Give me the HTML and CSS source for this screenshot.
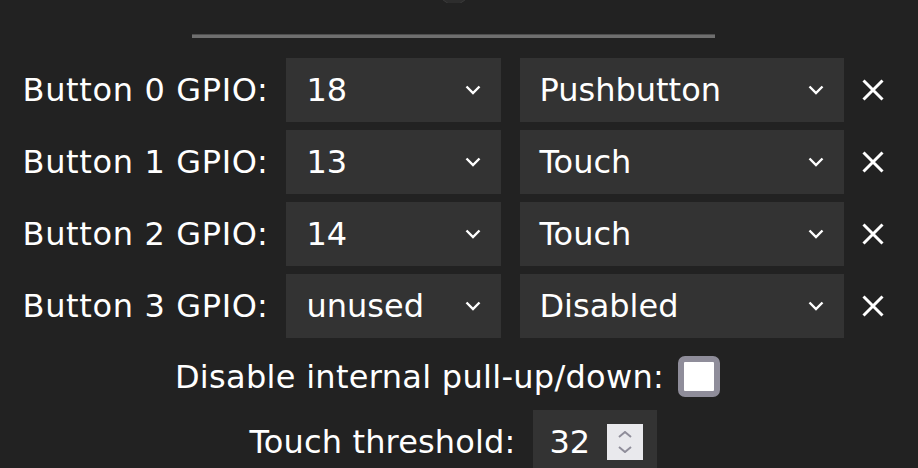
FILE: index.html
```html
<!DOCTYPE html>
<html>
<head>
<meta charset="utf-8">
<link rel="stylesheet" href="styles.css">
</head>
<body>
<div class="page">
  <div class="orb-clip"><div class="orb"></div></div>
  <div class="divider"></div>
  <div class="rows">
    <div class="label">Button 0 GPIO:</div>
    <div class="select pin"><span>18</span><svg class="chev" viewBox="0 0 16 10"><path d="M1.5 1.5 L8 8 L14.5 1.5"/></svg></div>
    <div class="select mode"><span>Pushbutton</span><svg class="chev" viewBox="0 0 16 10"><path d="M1.5 1.5 L8 8 L14.5 1.5"/></svg></div>
    <svg class="remove" viewBox="0 0 22 22"><path d="M1.5 1.5 L20.5 20.5 M20.5 1.5 L1.5 20.5"/></svg>

    <div class="label">Button 1 GPIO:</div>
    <div class="select pin"><span>13</span><svg class="chev" viewBox="0 0 16 10"><path d="M1.5 1.5 L8 8 L14.5 1.5"/></svg></div>
    <div class="select mode"><span>Touch</span><svg class="chev" viewBox="0 0 16 10"><path d="M1.5 1.5 L8 8 L14.5 1.5"/></svg></div>
    <svg class="remove" viewBox="0 0 22 22"><path d="M1.5 1.5 L20.5 20.5 M20.5 1.5 L1.5 20.5"/></svg>

    <div class="label">Button 2 GPIO:</div>
    <div class="select pin"><span>14</span><svg class="chev" viewBox="0 0 16 10"><path d="M1.5 1.5 L8 8 L14.5 1.5"/></svg></div>
    <div class="select mode"><span>Touch</span><svg class="chev" viewBox="0 0 16 10"><path d="M1.5 1.5 L8 8 L14.5 1.5"/></svg></div>
    <svg class="remove" viewBox="0 0 22 22"><path d="M1.5 1.5 L20.5 20.5 M20.5 1.5 L1.5 20.5"/></svg>

    <div class="label">Button 3 GPIO:</div>
    <div class="select pin"><span>unused</span><svg class="chev" viewBox="0 0 16 10"><path d="M1.5 1.5 L8 8 L14.5 1.5"/></svg></div>
    <div class="select mode"><span>Disabled</span><svg class="chev" viewBox="0 0 16 10"><path d="M1.5 1.5 L8 8 L14.5 1.5"/></svg></div>
    <svg class="remove" viewBox="0 0 22 22"><path d="M1.5 1.5 L20.5 20.5 M20.5 1.5 L1.5 20.5"/></svg>
  </div>
  <div class="option-row">
    <span class="opt-label">Disable internal pull-up/down:</span>
    <div class="checkbox"></div>
  </div>
  <div class="option-row touch-row">
    <span class="opt-label touch-label">Touch threshold:</span>
    <div class="number">
      <span>32</span>
      <div class="spinner">
        <svg viewBox="0 0 14 7"><path d="M1 6 L7 1 L13 6"/></svg>
        <svg viewBox="0 0 14 7"><path d="M1 1 L7 6 L13 1"/></svg>
      </div>
    </div>
  </div>
</div>
</body>
</html>
```
FILE: styles.css
```css
html, body {
  margin: 0;
  padding: 0;
  background: #222222;
  height: 100%;
  overflow: hidden;
}
body {
  font-family: "DejaVu Sans", sans-serif;
  font-size: 32px;
  color: #ffffff;
}
.page {
  width: 907px;
  display: flex;
  flex-direction: column;
  align-items: center;
}
.orb-clip {
  height: 3px;
  overflow: hidden;
  display: flex;
  justify-content: center;
  width: 100%;
}
.orb {
  flex-shrink: 0;
  width: 30px;
  height: 30px;
  margin-top: -27px;
  border-radius: 50%;
  background: #2d2d2d;
  border: 1px solid #3a3a3a;
}
.divider {
  margin-top: 31px;
  width: 523px;
  height: 0;
  border-top: 1px solid #4f4f4f;
  border-bottom: 3px solid #6f6f6f;
}
.rows {
  margin-top: 20px;
  display: grid;
  grid-template-columns: max-content 215px 325px 22px;
  grid-auto-rows: 64px;
  column-gap: 18px;
  row-gap: 8px;
  align-items: center;
}
.label {
  white-space: nowrap;
  letter-spacing: 0.65px;
}
.select {
  height: 64px;
  box-sizing: border-box;
  background: #333333;
  display: flex;
  align-items: center;
  justify-content: space-between;
  padding: 0 20px;
}
.mode {
  margin-left: 1px;
  padding-left: 19px;
  padding-right: 20px;
}
.chev {
  width: 16px;
  height: 10px;
  fill: none;
  stroke: #ffffff;
  stroke-width: 2.4;
}
.remove {
  width: 22px;
  height: 22px;
  fill: none;
  stroke: #ffffff;
  stroke-width: 3;
}
.option-row {
  display: flex;
  align-items: center;
  gap: 14px;
  margin-top: 18px;
  height: 41px;
}
.opt-label {
  letter-spacing: 0.3px;
}
.checkbox {
  width: 42px;
  height: 41px;
  box-sizing: border-box;
  border: 6px solid #8f8d9a;
  border-radius: 7px;
  background: #ffffff;
  margin-right: 12px;
}
.touch-row {
  margin-top: 13px;
  height: 64px;
  gap: 18px;
}
.touch-label {
  letter-spacing: 0.15px;
}
.number {
  width: 124px;
  height: 64px;
  box-sizing: border-box;
  background: #333333;
  display: flex;
  align-items: center;
  justify-content: space-between;
  padding: 0 14px 0 16px;
}
.spinner {
  width: 36px;
  height: 36px;
  background: #e9e9ed;
  display: flex;
  flex-direction: column;
  align-items: center;
  justify-content: center;
  gap: 8px;
}
.spinner svg {
  width: 14px;
  height: 7px;
  fill: none;
  stroke: #8f8d9a;
  stroke-width: 2;
}
```
